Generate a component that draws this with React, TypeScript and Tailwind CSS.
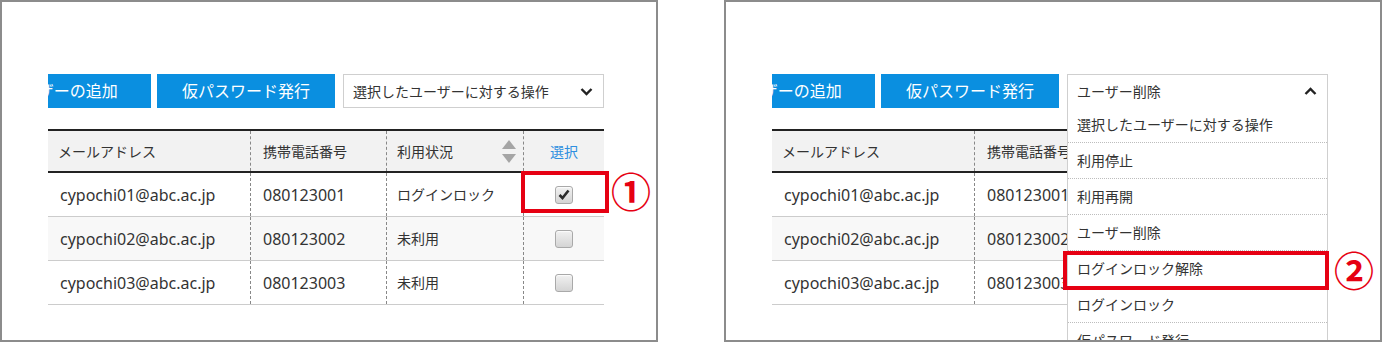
import React from "react";

type Row = {
  email: string;
  tel: string;
  status: string;
  checked: boolean;
};

const rows: Row[] = [
  { email: "cypochi01@abc.ac.jp", tel: "080123001", status: "ログインロック", checked: true },
  { email: "cypochi02@abc.ac.jp", tel: "080123002", status: "未利用", checked: false },
  { email: "cypochi03@abc.ac.jp", tel: "080123003", status: "未利用", checked: false },
];

const menuItems = [
  "選択したユーザーに対する操作",
  "利用停止",
  "利用再開",
  "ユーザー削除",
  "ログインロック解除",
  "ログインロック",
  "仮パスワード発行",
];

function Chevron({ up }: { up?: boolean }) {
  return (
    <svg width="13" height="9" viewBox="0 0 13 9" className="shrink-0">
      <polyline
        points={up ? "1.5,7 6.5,2 11.5,7" : "1.5,2 6.5,7 11.5,2"}
        fill="none"
        stroke="#222"
        strokeWidth="2.4"
      />
    </svg>
  );
}

function SortIcon() {
  return (
    <svg width="14" height="23" viewBox="0 0 14 23">
      <polygon points="7,0 14,9 0,9" fill="#a5a5a5" />
      <polygon points="0,14 14,14 7,23" fill="#a5a5a5" />
    </svg>
  );
}

function CheckBox({ checked }: { checked: boolean }) {
  return (
    <div className="flex h-[18px] w-[18px] items-center justify-center rounded-[3px] border border-[#a9a9a9] bg-linear-to-b from-[#f1f1f1] to-[#d4d4d4] shadow-[inset_0_1px_1px_rgba(255,255,255,0.8)]">
      {checked && (
        <svg width="12" height="11" viewBox="0 0 12 11">
          <path d="M1.5 6 L4.5 9 L10.5 1.5" fill="none" stroke="#2b2b2b" strokeWidth="2.6" />
        </svg>
      )}
    </div>
  );
}

function Panel({ open }: { open: boolean }) {
  return (
    <div className="relative h-[342px] w-[658px] shrink-0 overflow-hidden border-2 border-[#8c8c8c] bg-white pl-[46px] pt-[72px]">
      <div className="w-[556px]">
        {/* buttons + operation select */}
        <div className="flex h-[34px]">
          <div className="flex w-[103px] justify-end overflow-hidden">
            <button className="w-[178px] shrink-0 bg-[#0a8fe0] text-[16px] text-white">ユーザーの追加</button>
          </div>
          <button className="ml-[6px] w-[178px] shrink-0 bg-[#0a8fe0] text-[16px] text-white">仮パスワード発行</button>
          <div className="relative ml-2 flex w-[261px] items-center justify-between border border-[#cfcfcf] bg-white pl-[9px] pr-[10px] text-[14px] text-[#333]">
            <span>{open ? "ユーザー削除" : "選択したユーザーに対する操作"}</span>
            <Chevron up={open} />
            {open && (
              <div className="absolute left-[-1px] right-[-1px] top-full z-10 border-x border-[#cfcfcf] bg-white">
                {menuItems.map((item) => (
                  <div
                    key={item}
                    className="flex h-[36px] items-center border-b border-dotted border-[#bdbdbd] px-[9px] text-[14px] text-[#333]"
                  >
                    {item}
                  </div>
                ))}
              </div>
            )}
          </div>
        </div>

        {/* table */}
        <div className="mt-[21px] text-[#333]">
          <div className="grid h-[44px] grid-cols-[202px_136px_137px_81px] border-y-2 border-[#222] bg-[#f2f2f2] text-[14px]">
            <div className="flex items-center pl-[10px]">メールアドレス</div>
            <div className="flex items-center border-l border-dashed border-[#888] pl-[12px]">携帯電話番号</div>
            <div className="flex items-center justify-between border-l border-dashed border-[#888] pl-[10px] pr-[7px]">
              <span>利用状況</span>
              <SortIcon />
            </div>
            <div className="flex items-center justify-center border-l border-dashed border-[#888] text-[#2e8fe0]">選択</div>
          </div>
          {rows.map((row, i) => (
            <div
              key={row.email}
              className={
                "grid h-[44px] grid-cols-[202px_136px_137px_81px] border-b border-[#cccccc] " +
                (i === 1 ? "bg-[#f8f8f8]" : "bg-white")
              }
            >
              <div className="flex items-center pl-[12px] text-[16px]">{row.email}</div>
              <div className="flex items-center border-l border-dashed border-[#888] pl-[12px] text-[16px]">{row.tel}</div>
              <div className="flex items-center border-l border-dashed border-[#888] pl-[10px] text-[14px]">{row.status}</div>
              <div className="flex items-center justify-center border-l border-dashed border-[#888]">
                <CheckBox checked={row.checked} />
              </div>
            </div>
          ))}
        </div>
      </div>

      {/* annotations */}
      {open ? (
        <>
          <div className="absolute left-[337px] top-[249px] z-20 h-[39px] w-[266px] border-4 border-[#e60012]" />
          <span className="absolute left-[605px] top-[246px] z-20 flex h-[46px] w-[46px] items-center justify-center text-[40px] font-bold leading-none text-[#e60012]">②</span>
        </>
      ) : (
        <>
          <div className="absolute left-[519px] top-[169px] z-20 h-[42px] w-[88px] border-4 border-[#e60012]" />
          <span className="absolute left-[606px] top-[167px] z-20 flex h-[46px] w-[46px] items-center justify-center text-[40px] font-bold leading-none text-[#e60012]">①</span>
        </>
      )}
    </div>
  );
}

export default function App() {
  return (
    <div className="flex h-[342px] w-[1382px] gap-[66px] bg-white font-['Noto_Sans','Noto_Sans_CJK_JP',sans-serif]">
      <Panel open={false} />
      <Panel open={true} />
    </div>
  );
}
